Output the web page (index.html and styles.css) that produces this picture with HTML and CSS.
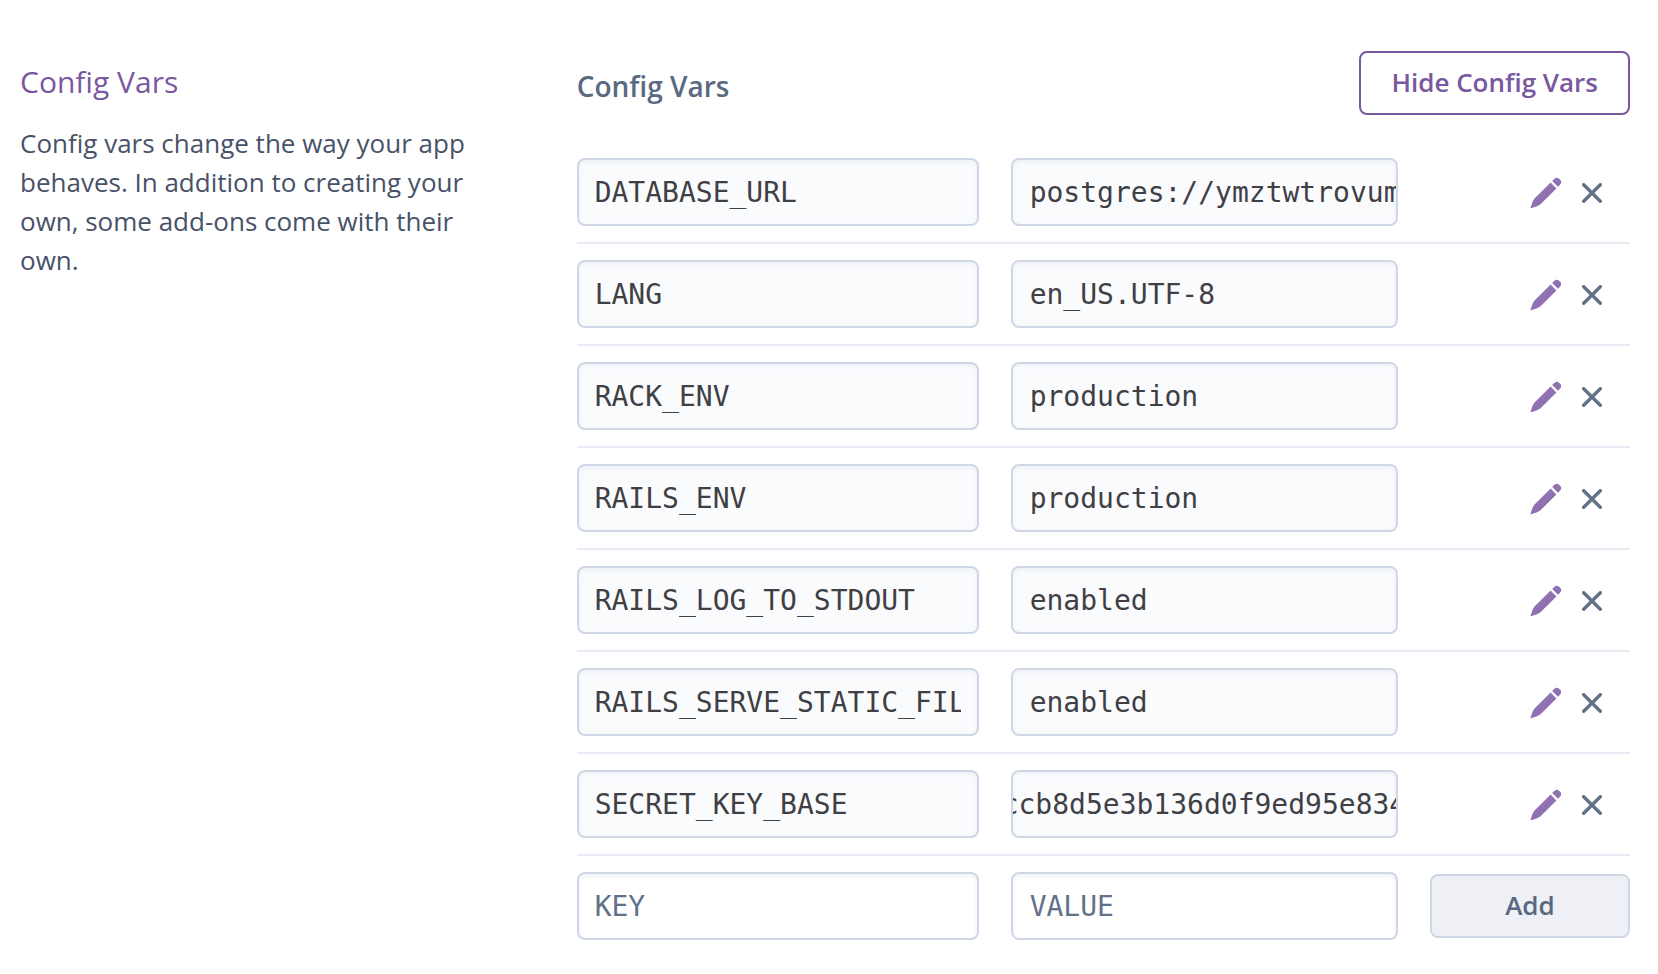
FILE: index.html
```
<!DOCTYPE html>
<html lang="en">
<head>
<meta charset="utf-8">
<title>Config Vars</title>
<link rel="stylesheet" href="styles.css">
</head>
<body>
<svg class="sprite" aria-hidden="true">
  <defs>
    <linearGradient id="pencil-fill" x1="0" y1="0" x2="1" y2="1">
      <stop offset="0" stop-color="#9a7dbb"/>
      <stop offset="1" stop-color="#8565a8"/>
    </linearGradient>
    <symbol id="pencil" viewBox="0 0 32 32">
      <path fill="url(#pencil-fill)" d="M20.600 5.600L26.400 11.400L11.500 26.300C10.300 27.500 8.500 28.700 6.500 29.500L1 31.300C.6 31.400 .4 31.200 .5 30.800L2.300 25.500C3 23.500 4.200 21.900 5.500 20.600ZM22.200 4L24.200 2C25.700 .5 27.800 .5 29.300 1.900L30.200 2.800C31.600 4.300 31.500 6.300 30 7.800L28 9.800Z"/>
    </symbol>
    <symbol id="cross" viewBox="0 0 20 20">
      <path fill="none" stroke="#62718a" stroke-width="3.400" stroke-linecap="round" d="M1.700 1.700L18.300 18.300M18.300 1.700L1.700 18.300"/>
    </symbol>
  </defs>
</svg>
<main class="settings">
  <section class="intro">
    <h2 class="intro-title">Config Vars</h2>
    <p class="intro-text">Config vars change the way your app behaves. In addition to creating your own, some add-ons come with their own.</p>
  </section>
  <section class="panel">
    <header class="panel-head">
      <h3 class="panel-title">Config Vars</h3>
      <button class="button button-outline" type="button">Hide Config Vars</button>
    </header>
    <table class="vars">
      <colgroup><col class="col-key"><col class="col-value"><col class="col-actions"></colgroup>
      <tbody>
        <tr>
          <td><input class="field key" type="text" readonly aria-label="Key 1" value="DATABASE_URL"></td>
          <td><input class="field value" type="text" readonly aria-label="DATABASE_URL value" value="postgres://ymztwtrovum"></td>
          <td><div class="actions"><button class="icon-button" type="button" aria-label="Edit DATABASE_URL"><svg class="pencil"><use href="#pencil"/></svg></button><button class="icon-button" type="button" aria-label="Delete DATABASE_URL"><svg class="cross"><use href="#cross"/></svg></button></div></td>
        </tr>
        <tr>
          <td><input class="field key" type="text" readonly aria-label="Key 2" value="LANG"></td>
          <td><input class="field value" type="text" readonly aria-label="LANG value" value="en_US.UTF-8"></td>
          <td><div class="actions"><button class="icon-button" type="button" aria-label="Edit LANG"><svg class="pencil"><use href="#pencil"/></svg></button><button class="icon-button" type="button" aria-label="Delete LANG"><svg class="cross"><use href="#cross"/></svg></button></div></td>
        </tr>
        <tr>
          <td><input class="field key" type="text" readonly aria-label="Key 3" value="RACK_ENV"></td>
          <td><input class="field value" type="text" readonly aria-label="RACK_ENV value" value="production"></td>
          <td><div class="actions"><button class="icon-button" type="button" aria-label="Edit RACK_ENV"><svg class="pencil"><use href="#pencil"/></svg></button><button class="icon-button" type="button" aria-label="Delete RACK_ENV"><svg class="cross"><use href="#cross"/></svg></button></div></td>
        </tr>
        <tr>
          <td><input class="field key" type="text" readonly aria-label="Key 4" value="RAILS_ENV"></td>
          <td><input class="field value" type="text" readonly aria-label="RAILS_ENV value" value="production"></td>
          <td><div class="actions"><button class="icon-button" type="button" aria-label="Edit RAILS_ENV"><svg class="pencil"><use href="#pencil"/></svg></button><button class="icon-button" type="button" aria-label="Delete RAILS_ENV"><svg class="cross"><use href="#cross"/></svg></button></div></td>
        </tr>
        <tr>
          <td><input class="field key" type="text" readonly aria-label="Key 5" value="RAILS_LOG_TO_STDOUT"></td>
          <td><input class="field value" type="text" readonly aria-label="RAILS_LOG_TO_STDOUT value" value="enabled"></td>
          <td><div class="actions"><button class="icon-button" type="button" aria-label="Edit RAILS_LOG_TO_STDOUT"><svg class="pencil"><use href="#pencil"/></svg></button><button class="icon-button" type="button" aria-label="Delete RAILS_LOG_TO_STDOUT"><svg class="cross"><use href="#cross"/></svg></button></div></td>
        </tr>
        <tr>
          <td><input class="field key" type="text" readonly aria-label="Key 6" value="RAILS_SERVE_STATIC_FILES"></td>
          <td><input class="field value" type="text" readonly aria-label="RAILS_SERVE_STATIC_FILES value" value="enabled"></td>
          <td><div class="actions"><button class="icon-button" type="button" aria-label="Edit RAILS_SERVE_STATIC_FILES"><svg class="pencil"><use href="#pencil"/></svg></button><button class="icon-button" type="button" aria-label="Delete RAILS_SERVE_STATIC_FILES"><svg class="cross"><use href="#cross"/></svg></button></div></td>
        </tr>
        <tr>
          <td><input class="field key" type="text" readonly aria-label="Key 7" value="SECRET_KEY_BASE"></td>
          <td><input class="field value value-scrolled" type="text" readonly aria-label="SECRET_KEY_BASE value" value="ccb8d5e3b136d0f9ed95e834"></td>
          <td><div class="actions"><button class="icon-button" type="button" aria-label="Edit SECRET_KEY_BASE"><svg class="pencil"><use href="#pencil"/></svg></button><button class="icon-button" type="button" aria-label="Delete SECRET_KEY_BASE"><svg class="cross"><use href="#cross"/></svg></button></div></td>
        </tr>
        <tr>
          <td><input class="field key field-new" type="text" aria-label="New key" placeholder="KEY"></td>
          <td><input class="field value field-new" type="text" aria-label="New value" placeholder="VALUE"></td>
          <td><button class="button button-add" type="button">Add</button></td>
        </tr>
      </tbody>
    </table>
  </section>
</main>
</body>
</html>
```
FILE: styles.css
```
* {
  box-sizing: border-box;
}

body {
  margin: 0;
  background: #fff;
  color: #475268;
  font-family: "Open Sans", "Noto Sans", sans-serif;
}

.sprite {
  position: absolute;
  width: 0;
  height: 0;
}

.settings {
  display: grid;
  grid-template-columns: 1fr 2fr;
  gap: 30px;
  padding: 51px 28px 18px 20px;
}

.intro {
  padding: 11px 48px 0 0;
}

.intro-title {
  margin: 0;
  color: #79589f;
  font-size: 30px;
  font-weight: 400;
  line-height: 40px;
}

.intro-text {
  margin: 22px 0 0;
  font-size: 26px;
  line-height: 39px;
}

.panel-head {
  display: flex;
  align-items: center;
  justify-content: space-between;
  margin-bottom: 27px;
}

.panel-title {
  margin: 6px 0 0;
  color: #596981;
  font-size: 28px;
  font-weight: 600;
  line-height: 36px;
}

.button {
  height: 64px;
  padding: 0 30px 2px;
  border: 2px solid;
  border-radius: 8px;
  font: 600 26px/36px "Open Sans", "Noto Sans", sans-serif;
}

.button-outline {
  border-color: #79589f;
  background: #fff;
  color: #79589f;
}

.button-add {
  display: block;
  width: 100%;
  border-color: #cfd7e6;
  background: #eef0f6;
  color: #596981;
}

.vars {
  width: 100%;
  border-collapse: collapse;
  table-layout: fixed;
}

.col-key {
  width: 41.2%;
}

.col-value {
  width: 39.8%;
}

.col-actions {
  width: 19%;
}

.vars tr {
  border-bottom: 2px solid #e7ebf3;
}

.vars tr:last-child {
  border-bottom: 0;
}

.vars td {
  padding: 16px 32px 16px 0;
}

.vars td:last-child {
  padding-right: 0;
}

.field {
  display: block;
  width: 100%;
  height: 68px;
  border: 2px solid #cfd7e6;
  border-radius: 8px;
  background: #fafbfd;
  box-shadow: inset 0 2px 4px #edf0f5;
  color: #3f3f44;
  font: 28px/36px "DejaVu Sans Mono", monospace;
}

.key {
  padding: 0 16px;
}

.value {
  padding: 0;
  text-indent: 17px;
}

.value-scrolled {
  text-indent: -11px;
}

.field-new {
  background: #fff;
}

.field::placeholder {
  color: #62718a;
  opacity: 1;
}

.actions {
  display: flex;
  align-items: center;
  justify-content: flex-end;
  gap: 20px;
  padding: 2px 28px 0 0;
}

.icon-button {
  padding: 0;
  border: 0;
  background: none;
}

.icon-button svg {
  display: block;
}

.pencil {
  width: 32px;
  height: 32px;
}

.cross {
  width: 20px;
  height: 20px;
}
```
